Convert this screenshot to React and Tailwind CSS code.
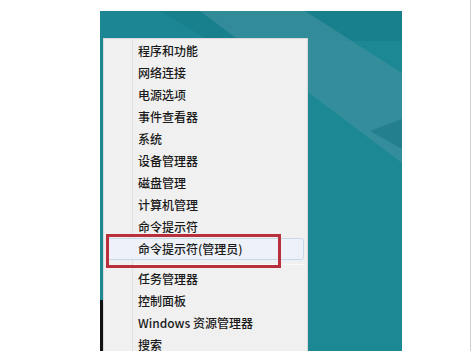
import React from "react"

const topItems = [
  "程序和功能",
  "网络连接",
  "电源选项",
  "事件查看器",
  "系统",
  "设备管理器",
  "磁盘管理",
  "计算机管理",
  "命令提示符",
]

const bottomItems = ["任务管理器", "控制面板", "Windows 资源管理器", "搜索"]

function Row({ label }) {
  return (
    <div className="h-[22px] flex items-center pl-[34px] text-[12px] font-medium leading-none text-[#1a1a1a]">
      {label}
    </div>
  )
}

export default function App() {
  return (
    <div
      className="w-[472px] h-[351px] bg-white overflow-hidden flex"
      style={{ fontFamily: '"Noto Sans CJK SC", "Noto Sans", sans-serif' }}
    >
      <div className="w-[100px] shrink-0" />

      {/* desktop */}
      <div className="relative mt-[11px] w-[302px] h-[340px] bg-[#1b8893] overflow-hidden">
        <svg className="absolute inset-0" width="302" height="340" viewBox="0 0 302 340">
          <rect x="0" y="0" width="302" height="30" fill="#187f8c" />
          <polygon points="100,0 205,0 302,62 302,152" fill="#3a8f9c" opacity="0.8" />
          <polygon points="0,0 60,0 110,30 0,30" fill="#1d8694" />
          <polygon points="270,120 302,108 302,138" fill="#237f8c" />
        </svg>
        <div className="absolute left-0 top-[289px] w-[3px] h-[60px] bg-[#111]" />

        {/* context menu */}
        <div className="absolute left-[3px] top-[27px] w-[205px] h-[320px] bg-[#f0f0f0] border border-[#d8d8d8] pt-[1px]">
          <div className="absolute left-[28px] top-0 bottom-0 w-px bg-[#e2e2e2]" />
          <div className="relative">
            {topItems.map((t) => (
              <Row key={t} label={t} />
            ))}
            <div className="mx-[3px] h-[22px] flex items-center pl-[30px] text-[12px] font-medium leading-none text-[#1a1a1a] rounded-[3px] border border-[#c8d8ec] bg-[#eef2f8]">
              命令提示符(管理员)
            </div>
            <div className="h-[8px] flex items-center pl-[29px] pr-[2px]">
              <div className="w-full h-px bg-[#fafafa]" />
            </div>
            {bottomItems.map((t) => (
              <Row key={t} label={t} />
            ))}
          </div>
          <div className="absolute left-[2px] top-[195px] w-[175px] h-[34px] border-[3px] border-[#b8303c]" />
        </div>
      </div>

      <div className="flex-1" />
      <div className="w-px h-full bg-[#cfcfcf] mr-[1px]" />
    </div>
  )
}
